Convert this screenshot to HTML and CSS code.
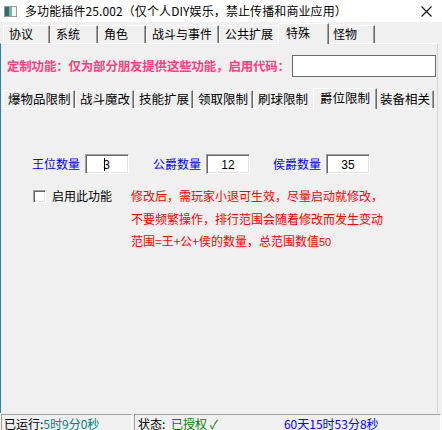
FILE: index.html
```html
<!DOCTYPE html>
<html lang="zh-CN">
<head>
<meta charset="utf-8">
<title>多功能插件25.002</title>
<link rel="stylesheet" href="styles.css">
</head>
<body>
<div class="window">
  <div class="titlebar">
    <svg class="app-icon" width="13" height="11" viewBox="0 0 13 11">
      <rect x="0.5" y="0.5" width="12" height="10" fill="#dcdcdc" stroke="#9a9a9a"/>
      <rect x="1" y="1" width="4" height="9" fill="#2f6d6a"/>
      <rect x="5" y="1" width="3" height="9" fill="#7fb0a8"/>
      <rect x="8" y="1" width="4" height="9" fill="#f4f4f4"/>
    </svg>
    <span class="title">多功能插件25.002（仅个人DIY娱乐，禁止传播和商业应用）</span>
    <svg class="close" width="11" height="11" viewBox="0 0 11 11">
      <path d="M0.5 0.5 L10.5 10.5 M10.5 0.5 L0.5 10.5" stroke="#111" stroke-width="1.1"/>
    </svg>
  </div>

  <div class="tabs outer-tabs">
    <div class="tab t-a">协议</div>
    <div class="tab t-b">系统</div>
    <div class="tab t-c">角色</div>
    <div class="tab t-d">战斗与事件</div>
    <div class="tab t-e">公共扩展</div>
    <div class="tab t-f active">特殊</div>
    <div class="tab t-g">怪物</div>
  </div>

  <div class="panel outer-panel">
    <div class="code-row">
      <span class="code-label">定制功能：仅为部分朋友提供这些功能，启用代码：</span>
      <div class="code-input"></div>
    </div>

    <div class="tabs inner-tabs">
      <div class="tab s-a">爆物品限制</div>
      <div class="tab s-b">战斗魔改</div>
      <div class="tab s-c">技能扩展</div>
      <div class="tab s-d">领取限制</div>
      <div class="tab s-e">刷球限制</div>
      <div class="tab s-f active">爵位限制</div>
      <div class="tab s-g">装备相关</div>
    </div>

    <div class="panel inner-panel">
      <div class="fields">
        <label class="field f-king">王位数量<span class="num-box"><span class="caret"></span>3</span></label>
        <label class="field f-duke">公爵数量<span class="num-box">12</span></label>
        <label class="field f-marq">侯爵数量<span class="num-box">35</span></label>
      </div>
      <div class="options">
        <label class="check"><span class="check-box"></span>启用此功能</label>
        <div class="notes">
          <p>修改后，需玩家小退可生效，尽量启动就修改，</p>
          <p>不要频繁操作，排行范围会随着修改而发生变动</p>
          <p>范围=王+公+侯的数量，总范围数值<span class="latin">50</span></p>
        </div>
      </div>
    </div>
  </div>

  <div class="statusbar">
    <div class="status-cell run">已运行:<span class="teal">5时9分0秒</span></div>
    <div class="status-cell state">状态: <span class="green">已授权 ✓</span><span class="blue remain">60天15时53分8秒</span></div>
  </div>
</div>
</body>
</html>
```

FILE: styles.css
```css
* {
  box-sizing: border-box;
}

html, body {
  margin: 0;
  padding: 0;
}

body {
  background: #f0f0f0;
  font-family: "Noto Sans CJK SC", "Liberation Sans", sans-serif;
  font-size: 12px;
  color: #000;
}

.window {
  width: 442px;
  height: 430px;
  display: flex;
  flex-direction: column;
  overflow: hidden;
}

/* ---- title bar ---- */
.titlebar {
  height: 22px;
  background: #fff;
  display: flex;
  align-items: center;
  padding-left: 4px;
  flex: none;
}

.app-icon {
  display: block;
  margin-top: 0;
}

.title {
  margin-left: 8px;
  font-size: 12px;
  line-height: 16px;
  letter-spacing: 0.1px;
}

.close {
  display: block;
  margin-left: auto;
  margin-right: 10px;
}

/* ---- tab strips ---- */
.tabs {
  display: flex;
  align-items: flex-end;
  padding-left: 3px;
  position: relative;
  z-index: 1;
  flex: none;
}

.tab {
  height: 18px;
  border-top: 1px solid #fff;
  border-left: 1px solid #fff;
  border-right: 1px solid #696969;
  box-shadow: inset -1px 0 0 #a0a0a0;
  padding-left: 5px;
  line-height: 16px;
  white-space: nowrap;
  background: #f0f0f0;
}

.tab.active {
  height: 21px;
  margin-bottom: -1px;
  margin-left: -2px;
  margin-right: -2px;
  padding-left: 7px;
  line-height: 17px;
  position: relative;
  z-index: 2;
}

.outer-tabs {
  height: 21px;
}

.t-a { width: 47px; }
.t-b { width: 48px; }
.t-c { width: 48px; }
.t-d { width: 73px; }
.t-e { width: 61px; }
.t-f { width: 51px; }
.t-g { width: 48px; margin-left: 0; }

.inner-tabs {
  height: 21px;
}

.inner-tabs .tab {
  padding-left: 4px;
  font-size: 12.5px;
}

.inner-tabs .tab.active {
  padding-left: 6px;
}

.s-a { width: 72px; }
.s-b { width: 59px; }
.s-c { width: 59px; }
.s-d { width: 60px; }
.s-e { width: 62px; }
.s-f { width: 64px; }
.s-g { width: 59px; }

/* ---- tab pages ---- */
.panel {
  border-top: 1px solid #fff;
}

.outer-panel {
  flex: 1;
  display: flex;
  flex-direction: column;
  border-left: 1px solid #2b79d0;
  margin-right: 4px;
  border-right: 1px solid #d6d6d6;
  min-height: 0;
}

.code-row {
  display: flex;
  align-items: center;
  height: 43px;
  padding-left: 6px;
  padding-top: 1px;
}

.code-label {
  color: #ff4080;
  font-weight: bold;
  font-size: 12.5px;
  letter-spacing: -0.2px;
  line-height: 16px;
  width: 285px;
  white-space: nowrap;
}

.code-input {
  width: 144px;
  height: 22px;
  background: #fff;
  border: 1px solid #6a6a6a;
}

.inner-tabs {
  margin-left: -1px;
}

.inner-panel {
  flex: 1;
  padding-top: 45px;
}

/* ---- counts ---- */
.fields {
  display: flex;
  padding-left: 31px;
  height: 20px;
}

.field {
  display: flex;
  align-items: center;
  color: #0000ff;
  font-size: 12px;
  line-height: 14px;
  white-space: nowrap;
}

.f-king { width: 121px; }
.f-duke { width: 120px; }

.num-box {
  margin-left: 5px;
  width: 44px;
  height: 20px;
  background: #fff;
  border-top: 1px solid #a0a0a0;
  border-left: 1px solid #a0a0a0;
  border-right: 1px solid #fff;
  border-bottom: 1px solid #fff;
  box-shadow: inset 1px 1px 0 #696969, inset -1px -1px 0 #e3e3e3;
  color: #000;
  font-family: "Liberation Sans", sans-serif;
  font-size: 12px;
  display: flex;
  align-items: center;
  justify-content: center;
  padding-top: 1px;
}

.caret {
  display: inline-block;
  width: 1px;
  height: 13px;
  background: #000;
  margin-right: -2px;
}

/* ---- enable + notes ---- */
.options {
  display: flex;
  padding-left: 32px;
  margin-top: 11px;
}

.check {
  display: flex;
  align-items: flex-start;
  width: 98px;
  line-height: 14px;
  padding-top: 4px;
  white-space: nowrap;
}

.check-box {
  width: 13px;
  height: 13px;
  background: #fff;
  border-top: 1px solid #a0a0a0;
  border-left: 1px solid #a0a0a0;
  border-right: 1px solid #fff;
  border-bottom: 1px solid #fff;
  box-shadow: inset 1px 1px 0 #696969, inset -1px -1px 0 #e3e3e3;
  margin-right: 6px;
  margin-top: 1px;
}

.notes {
  color: #ff0000;
  font-size: 12px;
}

.notes p {
  margin: 0;
  line-height: 22.5px;
  white-space: nowrap;
}

.latin {
  font-family: "Liberation Sans", sans-serif;
  font-size: 11px;
}

/* ---- status bar ---- */
.statusbar {
  height: 17px;
  display: flex;
  flex: none;
  padding-top: 1px;
}

.status-cell {
  height: 16px;
  border-top: 1px solid #a0a0a0;
  border-left: 1px solid #a0a0a0;
  border-right: 1px solid #fff;
  padding-left: 2px;
  line-height: 17px;
  white-space: nowrap;
  overflow: hidden;
}

.run {
  width: 131px;
  margin-left: 1px;
}

.state {
  width: 307px;
  margin-left: 2px;
  padding-left: 3px;
}

.teal { color: #008080; }
.green { color: #008000; margin-left: 3px; }
.blue { color: #0000ff; }

.remain {
  margin-left: 66px;
}
```
